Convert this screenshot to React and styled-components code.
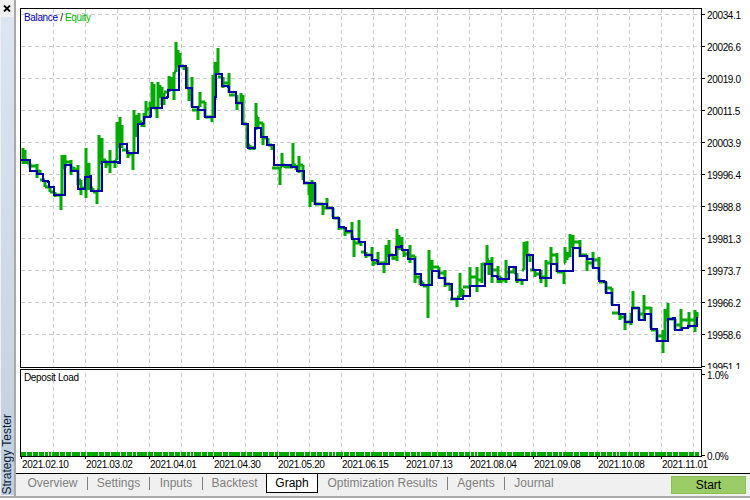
import React from "react";
import styled, { createGlobalStyle } from "styled-components";

const Global = createGlobalStyle`
  html, body { margin: 0; padding: 0; background: #fff; }
  * { box-sizing: border-box; }
`;

const blue = "21,160 29,160 30,171 36,171 37,174 42,174 43,181 48,182 49,187 54,187 54,195 64,195 65,165 71,165 71,171 77,171 78,189 83,189 85,177 90,176 91,191 102,191 102,162 118,163 120,144 126,144 127,153 137,153 138,124 143,123 144,117 150,116 151,108 161,108 162,98 167,97 168,90 179,90 179,66 185,66 186,88 191,88 192,107 198,107 198,110 203,110 205,117 214,117 215,97 216,74 221,74 222,86 228,87 229,92 235,92 236,103 241,103 242,124 248,124 248,148 254,148 255,128 259,128 261,137 267,137 267,145 273,145 274,165 291,165 291,167 297,168 297,171 303,171 304,183 314,183 315,204 325,204 327,208 332,208 333,218 338,218 339,227 344,228 346,231 352,231 352,239 358,239 359,242 364,242 365,255 371,255 372,260 377,261 378,264 389,264 389,255 395,255 396,247 401,246 402,250 408,250 408,259 413,259 415,274 420,274 421,285 432,285 432,271 437,271 439,278 444,278 445,284 451,284 452,299 462,299 463,296 469,296 470,286 484,286 485,264 490,264 492,276 497,277 498,279 508,279 509,267 514,267 516,280 525,280 527,255 532,255 533,270 539,270 540,278 549,278 551,264 556,264 557,271 573,271 573,248 579,248 580,256 586,256 587,259 592,259 593,268 598,268 599,281 604,282 606,293 611,293 612,305 617,305 619,314 623,314 625,322 631,322 632,308 637,308 639,320 643,320 645,314 649,314 651,329 656,329 657,341 667,341 668,319 673,318 675,330 680,330 682,328 687,328 688,326 695,326 697,318";

const green = [
  [23,148,164],[25,150,164],[27,160,164],[30,163,168],[37,164,178],[40,170,174],[45,180,187],[50,187,192],[55,192,197],[61,195,210],[62,155,195],[65,155,168],[71,160,175],[74,167,172],[78,165,185],[81,180,195],[86,148,198],[89,163,190],[93,188,192],[97,192,204],[99,135,190],[102,138,163],[106,160,168],[110,150,173],[115,160,168],[117,122,160],[120,117,148],[122,125,148],[128,150,158],[133,153,170],[134,110,153],[137,115,137],[139,113,125],[142,122,127],[144,113,127],[146,101,117],[150,102,118],[152,82,108],[154,84,108],[157,108,118],[158,82,108],[160,85,98],[162,87,105],[164,93,105],[169,76,92],[171,77,90],[174,72,100],[176,42,72],[178,50,67],[180,53,67],[184,66,70],[187,67,88],[189,88,101],[192,77,107],[198,110,120],[200,92,107],[205,102,117],[212,117,122],[213,75,117],[215,62,100],[217,62,75],[218,48,73],[223,77,88],[229,73,93],[237,95,110],[241,93,103],[243,95,125],[247,124,148],[250,145,150],[254,146,150],[256,103,130],[258,117,128],[263,123,145],[268,138,145],[272,145,150],[280,168,185],[282,153,167],[285,165,168],[293,143,167],[296,165,170],[299,156,173],[303,165,180],[309,183,195],
  [310,183,207],[312,180,202],[315,183,205],[323,204,215],[327,198,208],[333,208,217],[339,218,230],[345,228,236],[352,222,238],[354,238,257],[359,220,243],[361,243,246],[366,252,258],[372,247,260],[373,260,266],[378,252,264],[384,263,273],[386,245,263],[389,240,257],[393,255,260],[397,229,261],[399,235,250],[402,237,250],[404,250,257],[410,245,263],[415,256,283],[420,277,285],[423,282,286],[428,286,318],[429,250,286],[432,260,270],[439,267,278],[445,270,287],[450,284,291],[457,299,307],[460,273,297],[463,290,297],[470,267,287],[477,267,292],[482,263,283],[487,245,264],[489,260,275],[492,257,283],[498,266,283],[501,277,283],[506,260,283],[514,267,273],[517,273,283],[522,280,285],[524,242,270],[527,241,255],[530,255,262],[535,270,277],[541,270,283],[546,260,287],[551,247,263],[557,253,272],[564,272,284],[565,247,263],[567,252,260],[570,234,257],[573,235,248],[580,240,257],[587,255,271],[593,252,268],[599,257,280],[606,282,293],[612,288,305],[620,313,320],[625,313,330],[631,313,325],[633,291,308],[639,308,320],[644,295,320],[651,307,328],[657,330,342],[663,330,353],[665,309,340],[668,303,320],[675,319,330],[681,309,330],[689,312,328],[695,310,332],[697,312,318],
];

const clamp = (v, a, b) => Math.max(a, Math.min(b, v));
const greenPath = green
  .map(([x, a, b], i) => {
    const next = green[i + 1];
    const bar = `M${x} ${a}V${b}`;
    if (!next) return bar;
    const y = clamp(Math.round((a + b) / 2), next[1], next[2]);
    return `${bar}M${x} ${y}H${next[0]}`;
  })
  .join("");

const bluePath = blue
  .split(" ")
  .map((p) => p.split(",").map(Number))
  .map(([x, y], i) => (i ? `H${x}V${y}` : `M${x} ${y}`))
  .join("");

const range = (start, n, step) => Array.from({ length: n }, (_, i) => start + i * step);
const vLines = range(53, 21, 32);
const hLines = range(14, 11, 32);

const loadBars = [];
for (let x = 21, i = 0; x < 699; i++) {
  const w = [5, 5, 5, 5, 3, 2, 7, 5, 5, 8, 5, 11, 5, 5, 9, 5, 5, 3, 10, 5, 8][i % 21];
  loadBars.push([x, Math.min(w, 699 - x)]);
  x += w + 1;
}

const Window = styled.div`
  width: 750px;
  height: 500px;
  display: flex;
  background: #fff;
  overflow: hidden;
  font-family: "Liberation Sans", Arial, sans-serif;
`;
const Sidebar = styled.aside`
  width: 16px;
  height: 497px;
  flex: none;
  display: flex;
  flex-direction: column;
  border-right: 2px solid #a9a9a9;
  background: #f0f0f0;
`;
const CloseRow = styled.div`
  height: 17px;
  display: flex;
  align-items: center;
  justify-content: center;
  padding-right: 1px;
`;
const Strip = styled.div`
  flex: 1;
  margin: 0 0 2px 1px;
  background: linear-gradient(#dbe6f2, #c1cfde);
  display: flex;
  align-items: flex-end;
  justify-content: center;
`;
const StripLabel = styled.span`
  writing-mode: vertical-rl;
  transform: rotate(180deg);
  font-size: 12px;
  line-height: 13px;
  color: #0c1f3a;
  white-space: nowrap;
  padding-top: 1px;
`;
const Main = styled.main`
  flex: 1;
  display: flex;
  flex-direction: column;
  min-width: 0;
  height: 500px;
`;
const Plots = styled.div`
  padding: 8px 0 0 4px;
`;
const PlotRow = styled.div`
  display: flex;
  height: ${(p) => p.$h}px;
  overflow: ${(p) => (p.$clip ? "hidden" : "visible")};
`;
const Panel = styled.div`
  position: relative;
  width: 682px;
  height: ${(p) => p.$h}px;
  border: 1px solid #000;
  flex: none;
  background: #fff;
`;
const PlotSvg = styled.svg`
  display: block;
`;
const Legend = styled.div`
  position: absolute;
  left: 3px;
  top: ${(p) => p.$top}px;
  font-size: 10px;
  letter-spacing: -0.35px;
  line-height: 11px;
  color: #000;
  white-space: nowrap;
`;
const Tint = styled.span`
  color: ${(p) => p.$c};
`;
const Axis = styled.div`
  flex: 1;
  display: flex;
  flex-direction: column;
  gap: ${(p) => p.$gap}px;
  padding-top: ${(p) => p.$top}px;
`;
const AxisLabel = styled.div`
  position: relative;
  height: 10px;
  padding-left: 5px;
  font-size: 10px;
  letter-spacing: -0.35px;
  line-height: 10px;
  color: #000;
  white-space: nowrap;
  &::before {
    content: "";
    position: absolute;
    left: 0;
    top: 3px;
    width: 3px;
    height: 1px;
    background: #000;
  }
`;
const Dates = styled.div`
  height: 16px;
  padding-left: 5px;
  display: grid;
  grid-template-columns: repeat(11, 64px);
`;
const DateLabel = styled.div`
  position: relative;
  padding: 2px 0 0 1px;
  font-size: 10px;
  letter-spacing: -0.35px;
  line-height: 11px;
  color: #000;
  white-space: nowrap;
  &::before {
    content: "";
    position: absolute;
    left: 0;
    top: 0;
    width: 1px;
    height: 2px;
    background: #000;
  }
`;
const TabBar = styled.nav`
  height: 23px;
  flex: none;
  display: flex;
  align-items: flex-start;
  border-top: 1px solid #000;
  background: #f0f0f0;
  padding-left: 2px;
  position: relative;
`;
const Tab = styled.button`
  all: unset;
  box-sizing: border-box;
  width: ${(p) => p.$w}px;
  height: ${(p) => (p.$active ? 19 : 18)}px;
  text-align: center;
  font: 12px/17px "Liberation Sans", Arial, sans-serif;
  color: ${(p) => (p.$active ? "#000" : "#7f7f7f")};
  background: ${(p) => (p.$active ? "#fff" : "transparent")};
  border: ${(p) => (p.$active ? "1px solid #000" : "none")};
  border-top: none;
  padding-top: 1px;
`;
const Sep = styled.span`
  width: 1px;
  height: 13px;
  margin-top: 3px;
  background: #808080;
  flex: none;
`;
const Start = styled.button`
  all: unset;
  box-sizing: border-box;
  position: absolute;
  left: 655px;
  top: 2px;
  width: 75px;
  height: 18px;
  text-align: center;
  font: 12px/17px "Liberation Sans", Arial, sans-serif;
  color: #000;
  background: #9ccc66;
  border: 1px solid #8cbf57;
`;
const BottomEdge = styled.div`
  height: 2px;
  background: #a9a9a9;
  margin-left: -16px;
  flex: none;
`;

function Grid({ rows }) {
  return (
    <g stroke="#cccccc" strokeWidth="1" strokeDasharray="4 3" shapeRendering="crispEdges" fill="none">
      {vLines.map((x) => <line key={x} x1={x + 0.5} x2={x + 0.5} y1="9" y2="460" />)}
      {rows.map((y) => <line key={y} x1="21" x2="701" y1={y + 0.5} y2={y + 0.5} />)}
    </g>
  );
}

const yLabels = ["20034.1","20026.6","20019.0","20011.5","20003.9","19996.4","19988.8","19981.3","19973.7","19966.2","19958.6","19951.1"];
const dates = ["2021.02.10","2021.03.02","2021.04.01","2021.04.30","2021.05.20","2021.06.15","2021.07.13","2021.08.04","2021.09.08","2021.10.08","2021.11.01"];
const tabs = [["Overview",69,0],["Settings",61,1],["Inputs",52,1],["Backtest",63,1]];
const tabs2 = [["Optimization Results",129,0],["Agents",56,1],["Journal",58,1]];

export default function App() {
  return (
    <Window>
      <Global />
      <Sidebar>
        <CloseRow>
          <svg width="8" height="7" viewBox="0 0 8 7"><path d="M1 0.5l6 6M7 0.5l-6 6" stroke="#000" strokeWidth="1.8" fill="none" /></svg>
        </CloseRow>
        <Strip><StripLabel>Strategy Tester</StripLabel></Strip>
      </Sidebar>
      <Main>
        <Plots>
          <PlotRow $h={361} $clip>
            <Panel $h={360}>
              <PlotSvg width="680" height="358" viewBox="21 9 680 358">
                <Grid rows={hLines} />
                <path d={greenPath} stroke="#00aa00" strokeWidth="3" fill="none" />
                <path d={bluePath} stroke="#0000a8" strokeWidth="2" fill="none" strokeLinecap="square" />
              </PlotSvg>
              <Legend $top={3}>
                <Tint $c="#0000b4">Balance</Tint> / <Tint $c="#00b400">Equity</Tint>
              </Legend>
            </Panel>
            <Axis $gap={22} $top={3}>
              {yLabels.map((t) => <AxisLabel key={t}>{t}</AxisLabel>)}
            </Axis>
          </PlotRow>
          <PlotRow $h={88}>
            <Panel $h={88}>
              <PlotSvg width="680" height="86" viewBox="21 370 680 86">
                <Grid rows={[]} />
                <g fill="#00aa00">
                  {loadBars.map(([x, w]) => <rect key={x} x={x} y="452" width={w} height="4" />)}
                </g>
              </PlotSvg>
              <Legend $top={2}>Deposit Load</Legend>
            </Panel>
            <Axis $gap={71} $top={2}>
              <AxisLabel>1.0%</AxisLabel>
              <AxisLabel>0.0%</AxisLabel>
            </Axis>
          </PlotRow>
        </Plots>
        <Dates>
          {dates.map((d) => <DateLabel key={d}>{d}</DateLabel>)}
        </Dates>
        <TabBar>
          {tabs.map(([t, w, s]) => (
            <React.Fragment key={t}>
              {s ? <Sep /> : null}
              <Tab $w={w}>{t}</Tab>
            </React.Fragment>
          ))}
          <Tab $active $w={52}>Graph</Tab>
          {tabs2.map(([t, w, s]) => (
            <React.Fragment key={t}>
              {s ? <Sep /> : null}
              <Tab $w={w}>{t}</Tab>
            </React.Fragment>
          ))}
          <Start>Start</Start>
        </TabBar>
        <BottomEdge />
      </Main>
    </Window>
  );
}
